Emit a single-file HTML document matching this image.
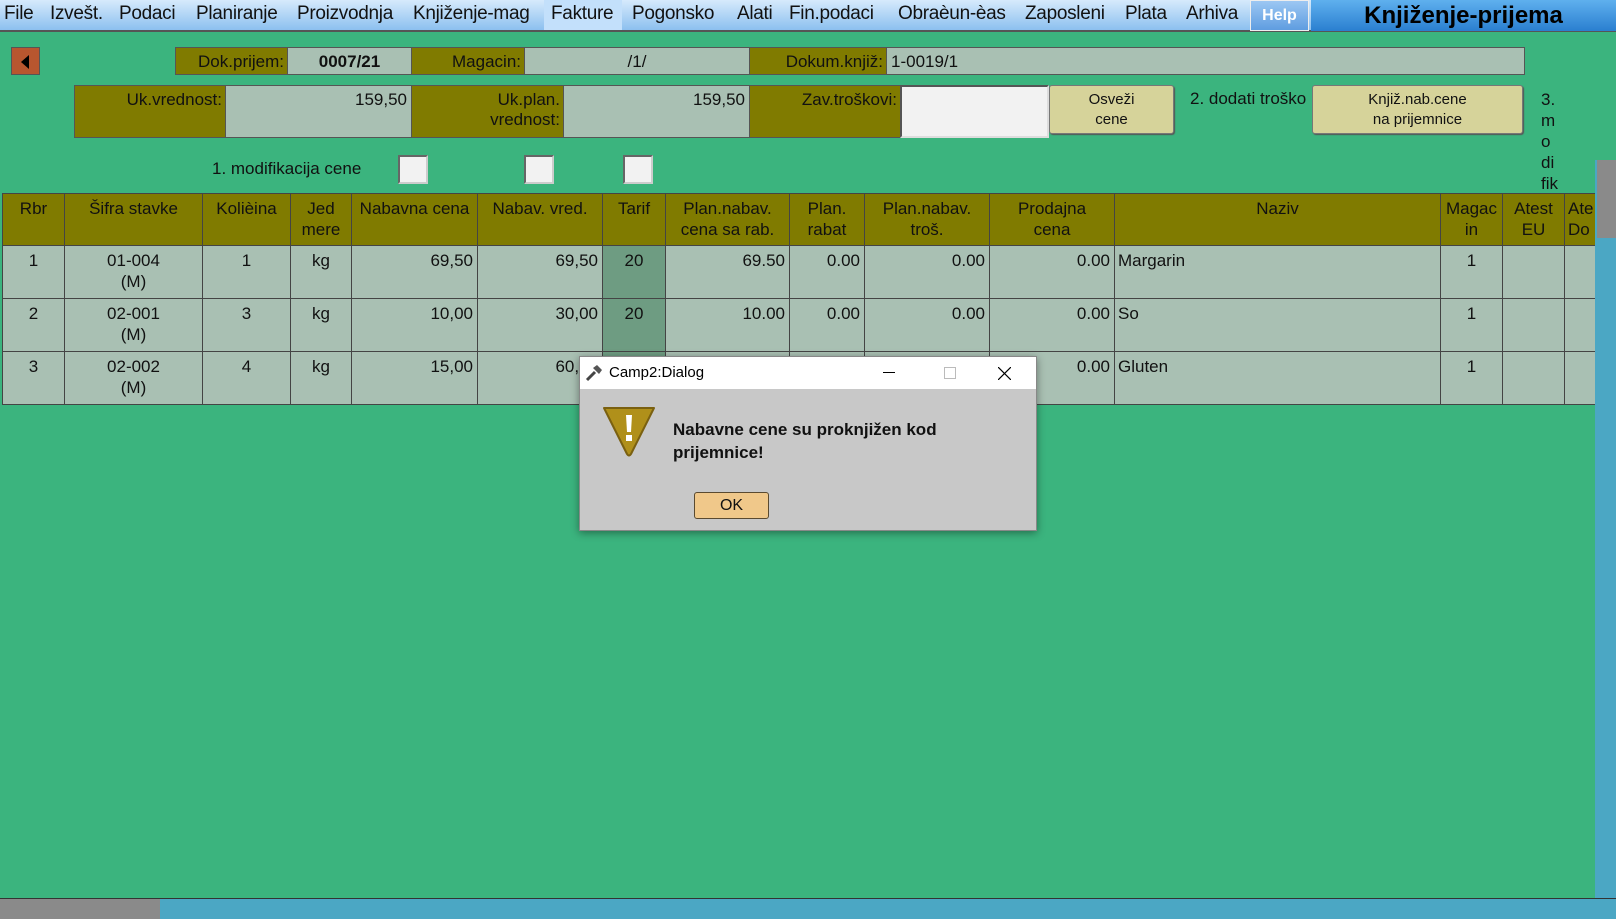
<!DOCTYPE html>
<html><head><meta charset="utf-8"><style>
*{box-sizing:border-box;margin:0;padding:0}
body{width:1616px;height:919px;overflow:hidden;background:#3bb47e;font-family:"Liberation Sans",sans-serif;position:relative;color:#111}
.a{position:absolute}
#menu{left:0;top:0;width:1616px;height:32px;background:linear-gradient(#d6eafc,#8cc0ef);border-bottom:2px solid #555}
.mi{position:absolute;top:3px;font-size:19px;color:#111;letter-spacing:-0.3px}
.lab{background:#807b00;border:1px solid #555;font-size:17px;color:#111;text-align:right;padding:4px 3px 2px}
.val{background:#a9c0b3;border:1px solid #555;font-size:17px;padding:4px 4px 2px}
.btn{background:#d6d39a;border:1px solid #777;border-radius:3px;font-size:15px;text-align:center;line-height:20px;padding-top:4px;box-shadow:1px 1px 1px #555}
.cb{background:#f2f2f2;border:2px solid #666;border-right-color:#ccc;border-bottom-color:#ccc}
table{position:absolute;left:2px;top:193px;border-collapse:collapse;table-layout:fixed}
td{border:1px solid #444;font-size:17px;vertical-align:top;text-align:center;line-height:21px;padding-top:4px;overflow:hidden;white-space:nowrap}
tr.h td{background:#807b00;height:52px}
tr.r td{background:#a9c0b3;height:53px}
td.n{text-align:right;padding-right:4px}
td.l{text-align:left;padding-left:3px}
td.t{background:#6e9c82 !important}
</style></head><body>
<div id="menu" class="a">
<span class="mi" style="left:4px">File</span>
<span class="mi" style="left:50px">Izvešt.</span>
<span class="mi" style="left:119px">Podaci</span>
<span class="mi" style="left:196px">Planiranje</span>
<span class="mi" style="left:297px">Proizvodnja</span>
<span class="mi" style="left:413px">Knjiženje-mag</span>
<div class="a" style="left:544px;top:0;width:78px;height:30px;background:#c3e0fb"></div>
<span class="mi" style="left:551px">Fakture</span>
<span class="mi" style="left:632px">Pogonsko</span>
<span class="mi" style="left:737px">Alati</span>
<span class="mi" style="left:789px">Fin.podaci</span>
<span class="mi" style="left:898px">Obraèun-èas</span>
<span class="mi" style="left:1025px">Zaposleni</span>
<span class="mi" style="left:1125px">Plata</span>
<span class="mi" style="left:1186px">Arhiva</span>
<div class="a" style="left:1250px;top:0;width:59px;height:31px;background:linear-gradient(#9cc7f3,#5f9de0);border:1px solid #eee;color:#fff;font-weight:bold;font-size:16px;text-align:center;line-height:29px">Help</div>
<div class="a" style="left:1311px;top:0;width:305px;height:31px;background:linear-gradient(#5fb0ee,#2a7fd0);color:#000;font-weight:bold;font-size:24px;text-align:center;line-height:31px">Knjiženje-prijema</div>
</div>

<div class="a" style="left:11px;top:47px;width:29px;height:28px;background:#b8562f;border:1px solid #555"><div class="a" style="left:9px;top:7px;width:0;height:0;border-top:7px solid transparent;border-bottom:7px solid transparent;border-right:8px solid #000"></div></div>

<div class="a lab" style="left:175px;top:47px;width:113px;height:28px">Dok.prijem:</div>
<div class="a val" style="left:287px;top:47px;width:125px;height:28px;font-weight:bold;text-align:center">0007/21</div>
<div class="a lab" style="left:411px;top:47px;width:114px;height:28px">Magacin:</div>
<div class="a val" style="left:524px;top:47px;width:226px;height:28px;text-align:center">/1/</div>
<div class="a lab" style="left:749px;top:47px;width:138px;height:28px">Dokum.knjiž:</div>
<div class="a val" style="left:886px;top:47px;width:639px;height:28px">1-0019/1</div>

<div class="a lab" style="left:74px;top:85px;width:152px;height:53px">Uk.vrednost:</div>
<div class="a val" style="left:225px;top:85px;width:187px;height:53px;text-align:right">159,50</div>
<div class="a lab" style="left:411px;top:85px;width:153px;height:53px;line-height:20px">Uk.plan.<br>vrednost:</div>
<div class="a val" style="left:563px;top:85px;width:187px;height:53px;text-align:right">159,50</div>
<div class="a lab" style="left:749px;top:85px;width:152px;height:53px">Zav.troškovi:</div>
<div class="a" style="left:900px;top:85px;width:149px;height:53px;background:#f2f2f2;border:2px solid #555;border-right-color:#ddd;border-bottom-color:#ddd"></div>
<div class="a btn" style="left:1049px;top:85px;width:125px;height:49px">Osveži<br>cene</div>
<div class="a" style="left:1190px;top:89px;font-size:17px">2. dodati troško</div>
<div class="a btn" style="left:1312px;top:85px;width:211px;height:49px">Knjiž.nab.cene<br>na prijemnice</div>
<div class="a" style="left:1541px;top:89px;font-size:17px;line-height:21px">3.<br>m<br>o<br>di<br>fik</div>

<div class="a" style="left:212px;top:159px;font-size:17px">1. modifikacija cene</div>
<div class="a cb" style="left:398px;top:155px;width:30px;height:29px"></div>
<div class="a cb" style="left:524px;top:155px;width:30px;height:29px"></div>
<div class="a cb" style="left:623px;top:155px;width:30px;height:29px"></div>

<table>
<colgroup><col style="width:62px"><col style="width:138px"><col style="width:88px"><col style="width:61px"><col style="width:126px"><col style="width:125px"><col style="width:63px"><col style="width:124px"><col style="width:75px"><col style="width:125px"><col style="width:125px"><col style="width:326px"><col style="width:62px"><col style="width:62px"><col style="width:40px"></colgroup>
<tr class="h"><td>Rbr</td><td>Šifra stavke</td><td>Kolièina</td><td>Jed<br>mere</td><td>Nabavna cena</td><td>Nabav. vred.</td><td>Tarif</td><td>Plan.nabav.<br>cena sa rab.</td><td>Plan.<br>rabat</td><td>Plan.nabav.<br>troš.</td><td>Prodajna<br>cena</td><td>Naziv</td><td>Magac<br>in</td><td>Atest<br>EU</td><td class="l">Ate<br>Do</td></tr>
<tr class="r"><td>1</td><td>01-004<br>(M)</td><td>1</td><td>kg</td><td class="n">69,50</td><td class="n">69,50</td><td class="t">20</td><td class="n">69.50</td><td class="n">0.00</td><td class="n">0.00</td><td class="n">0.00</td><td class="l">Margarin</td><td>1</td><td></td><td></td></tr>
<tr class="r"><td>2</td><td>02-001<br>(M)</td><td>3</td><td>kg</td><td class="n">10,00</td><td class="n">30,00</td><td class="t">20</td><td class="n">10.00</td><td class="n">0.00</td><td class="n">0.00</td><td class="n">0.00</td><td class="l">So</td><td>1</td><td></td><td></td></tr>
<tr class="r"><td>3</td><td>02-002<br>(M)</td><td>4</td><td>kg</td><td class="n">15,00</td><td class="n">60,00</td><td class="t">20</td><td class="n">15.00</td><td class="n">0.00</td><td class="n">0.00</td><td class="n">0.00</td><td class="l">Gluten</td><td>1</td><td></td><td></td></tr>
</table>

<div class="a" style="left:1595px;top:160px;width:21px;height:739px;background:#4ba7c4"></div>
<div class="a" style="left:1597px;top:160px;width:19px;height:78px;background:#8a8a8a"></div>
<div class="a" style="left:0;top:898px;width:1616px;height:21px;background:#4ba7c4;border-top:1px solid #333"></div>
<div class="a" style="left:0;top:899px;width:160px;height:20px;background:#8a8a8a"></div>

<div class="a" style="left:579px;top:356px;width:458px;height:175px;background:#c8c8c8;border:1px solid #888;box-shadow:0 2px 8px rgba(0,0,0,.4)">
<div class="a" style="left:0;top:0;width:456px;height:32px;background:#fff;font-size:15px;line-height:32px">
<svg class="a" style="left:4px;top:6px" width="20" height="20" viewBox="0 0 20 20"><path d="M3 17L11 9" stroke="#444" stroke-width="3"/><path d="M9 5l4-3 5 5-3 4z" fill="#555"/></svg>
<span class="a" style="left:29px;top:0;color:#000">Camp2:Dialog</span>
<div class="a" style="left:303px;top:15px;width:12px;height:1px;background:#000"></div>
<div class="a" style="left:364px;top:10px;width:12px;height:12px;border:1px solid #bbb"></div>
<svg class="a" style="left:418px;top:10px" width="13" height="13"><path d="M0 0L13 13M13 0L0 13" stroke="#000" stroke-width="1.2"/></svg>
</div>
<svg class="a" style="left:21px;top:48px" width="56" height="52" viewBox="0 0 56 52"><path d="M3 3H53L30 49Q28 52 26 49Z" fill="#b0901a" stroke="#7a6010" stroke-width="2" stroke-linejoin="round"/><path d="M25 10h6l-1 17h-4z" fill="#fff"/><rect x="25" y="30" width="6" height="6" fill="#fff"/></svg>
<div class="a" style="left:93px;top:61px;font-size:17px;font-weight:bold;line-height:23px;color:#111">Nabavne cene su proknjižen kod<br>prijemnice!</div>
<div class="a" style="left:114px;top:135px;width:75px;height:27px;background:#f0c88a;border:1px solid #5a4a30;border-radius:3px;font-size:16px;text-align:center;line-height:25px">OK</div>
</div>
</body></html>
